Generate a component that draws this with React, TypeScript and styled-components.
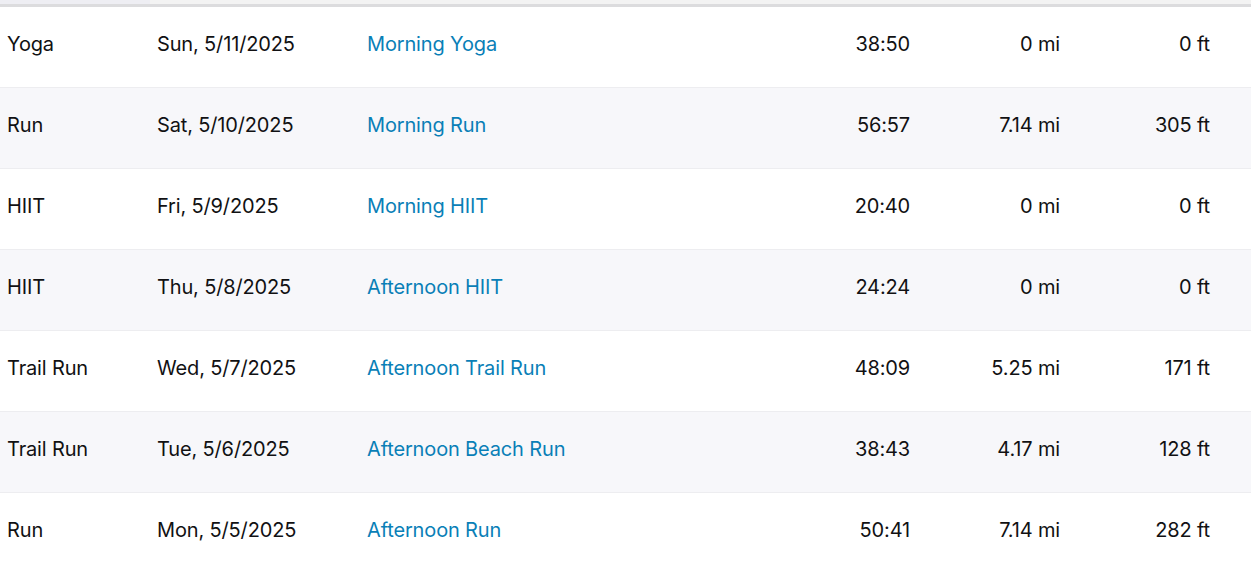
import styled, { createGlobalStyle } from "styled-components";

interface Activity {
    sport: string;
    date: string;
    title: string;
    time: string;
    distance: string;
    elevation: string;
}

const activities: Activity[] = [
    { sport: "Yoga", date: "Sun, 5/11/2025", title: "Morning Yoga", time: "38:50", distance: "0 mi", elevation: "0 ft" },
    { sport: "Run", date: "Sat, 5/10/2025", title: "Morning Run", time: "56:57", distance: "7.14 mi", elevation: "305 ft" },
    { sport: "HIIT", date: "Fri, 5/9/2025", title: "Morning HIIT", time: "20:40", distance: "0 mi", elevation: "0 ft" },
    { sport: "HIIT", date: "Thu, 5/8/2025", title: "Afternoon HIIT", time: "24:24", distance: "0 mi", elevation: "0 ft" },
    { sport: "Trail Run", date: "Wed, 5/7/2025", title: "Afternoon Trail Run", time: "48:09", distance: "5.25 mi", elevation: "171 ft" },
    { sport: "Trail Run", date: "Tue, 5/6/2025", title: "Afternoon Beach Run", time: "38:43", distance: "4.17 mi", elevation: "128 ft" },
    { sport: "Run", date: "Mon, 5/5/2025", title: "Afternoon Run", time: "50:41", distance: "7.14 mi", elevation: "282 ft" },
];

const GlobalStyle = createGlobalStyle`
    body {
        margin: 0;
        background: #ffffff;
        font-family: Inter, "Noto Sans", sans-serif;
        color: #111113;
    }
`;

const columns = "150px 210px 1fr 150px 150px 150px 34px";

const Table = styled.div`
    width: 100%;
    display: flex;
    flex-direction: column;
`;

const HeaderRow = styled.div`
    display: grid;
    grid-template-columns: ${columns};
    height: 4px;
    border-bottom: 3px solid #dcdcde;
    background: #f3f3f3;
`;

const HeaderCell = styled.div<{ $sorted?: boolean }>`
    background: ${({ $sorted }) => ($sorted ? "#eeeef3" : "transparent")};
`;

const Row = styled.div<{ $alt: boolean }>`
    display: grid;
    grid-template-columns: ${columns};
    height: 80px;
    align-items: center;
    border-bottom: 1px solid #ededf0;
    background: ${({ $alt }) => ($alt ? "#f7f7fa" : "#ffffff")};
`;

const Cell = styled.div<{ $right?: boolean }>`
    padding: 0 7px 6px;
    font-size: 20px;
    line-height: 24px;
    letter-spacing: -0.15px;
    white-space: nowrap;
    text-align: ${({ $right }) => ($right ? "right" : "left")};
`;

const TitleLink = styled.a`
    color: #0a7fb7;
    text-decoration: none;
    cursor: pointer;
`;

export default function App() {
    return (
        <>
            <GlobalStyle />
            <Table>
                <HeaderRow>
                    <HeaderCell $sorted />
                    <HeaderCell />
                    <HeaderCell />
                    <HeaderCell />
                    <HeaderCell />
                    <HeaderCell />
                    <HeaderCell />
                </HeaderRow>
                {activities.map((a, i) => (
                    <Row key={a.date} $alt={i % 2 === 1}>
                        <Cell>{a.sport}</Cell>
                        <Cell>{a.date}</Cell>
                        <Cell>
                            <TitleLink>{a.title}</TitleLink>
                        </Cell>
                        <Cell $right>{a.time}</Cell>
                        <Cell $right>{a.distance}</Cell>
                        <Cell $right>{a.elevation}</Cell>
                        <Cell />
                    </Row>
                ))}
            </Table>
        </>
    );
}
